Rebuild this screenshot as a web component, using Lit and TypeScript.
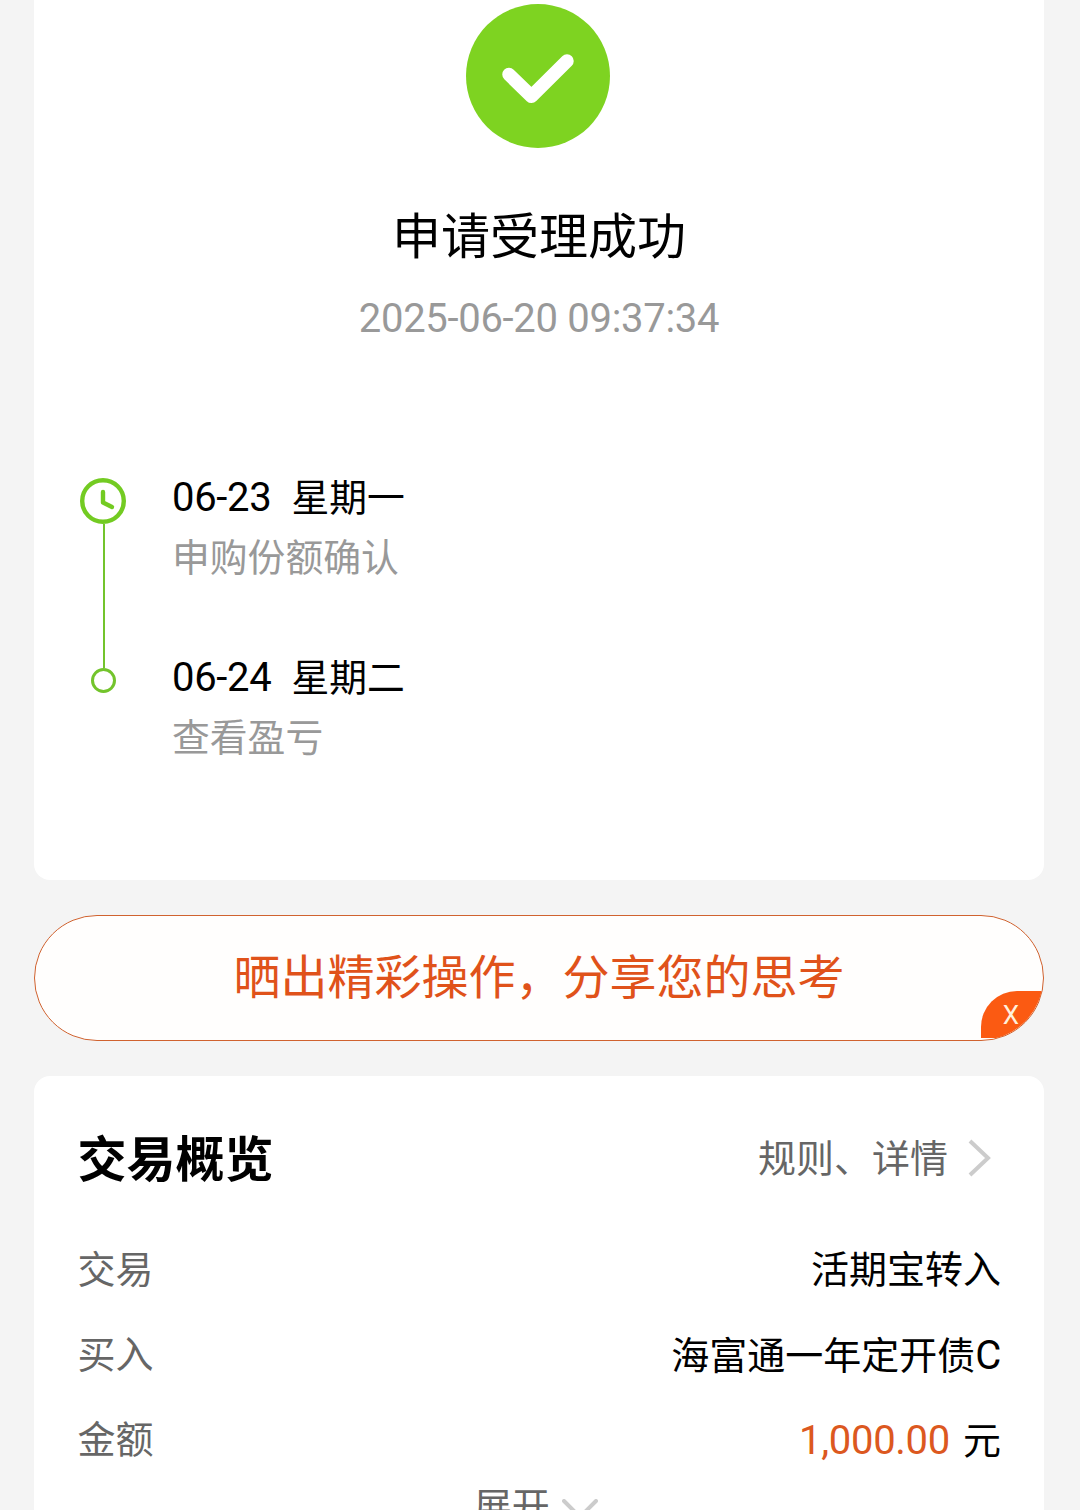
import { LitElement, html, css } from "lit";
import { customElement } from "lit/decorators.js";

interface Step {
  day: string;
  weekday: string;
  note: string;
}

const steps: Step[] = [
  { day: "06-23", weekday: "星期一", note: "申购份额确认" },
  { day: "06-24", weekday: "星期二", note: "查看盈亏" },
];

@customElement("result-card")
class ResultCard extends LitElement {
  static styles = css`
    :host {
      display: flex;
      flex-direction: column;
      box-sizing: border-box;
      height: 880px;
      padding: 4px 46px 0;
      background: #fff;
      border-radius: 0 0 16px 16px;
    }
    .badge {
      display: block;
      align-self: center;
      width: 146px;
      height: 144px;
      margin-right: 2px;
    }
    .title,
    .time {
      text-align: center;
      line-height: 60px;
      white-space: nowrap;
    }
    .title {
      margin-top: 60px;
      font-size: 49px;
      color: #000;
    }
    .time {
      margin-top: 21px;
      font-size: 40px;
      letter-spacing: -0.3px;
      color: #999;
    }
    .timeline {
      display: flex;
      margin-top: 119px;
    }
    .rail {
      display: flex;
      flex-direction: column;
      align-items: center;
      width: 47px;
      padding-top: 10px;
    }
    .clock {
      display: block;
      width: 47px;
      height: 46px;
    }
    .line {
      width: 2px;
      height: 144px;
      background: #73c42c;
    }
    .dot {
      box-sizing: border-box;
      width: 25px;
      height: 25px;
      border: 3px solid #73c42c;
      border-radius: 50%;
    }
    .steps {
      display: flex;
      flex-direction: column;
      gap: 60px;
      margin-left: 45px;
    }
    .head,
    .note {
      height: 60px;
      line-height: 60px;
      font-size: 37.8px;
      white-space: nowrap;
    }
    .head {
      display: flex;
      gap: 20px;
      color: #000;
    }
    .day {
      font-size: 40px;
      letter-spacing: -0.3px;
    }
    .note {
      line-height: 61px;
      color: #999;
    }
  `;

  render() {
    return html`
      <svg class="badge" viewBox="0 0 146 144">
        <circle cx="73" cy="72" r="72" fill="#7ed321" />
        <path d="M44 70.500 L66.500 92.300 L102 57" fill="none" stroke="#fff" stroke-width="13.500" stroke-linecap="round" stroke-linejoin="round" />
      </svg>
      <div class="title">申请受理成功</div>
      <div class="time">2025-06-20 09:37:34</div>
      <div class="timeline">
        <div class="rail">
          <svg class="clock" viewBox="0 0 47 46">
            <circle cx="23" cy="23" r="20.800" fill="none" stroke="#73cb22" stroke-width="4.400" />
            <path d="M23 14 V24.500 L32 29" fill="none" stroke="#73cb22" stroke-width="4.400" stroke-linecap="round" stroke-linejoin="round" />
          </svg>
          <div class="line"></div>
          <div class="dot"></div>
        </div>
        <div class="steps">
          ${steps.map(
            (s) => html`<div>
              <div class="head"><span class="day">${s.day}</span><span>${s.weekday}</span></div>
              <div class="note">${s.note}</div>
            </div>`
          )}
        </div>
      </div>
    `;
  }
}

@customElement("share-banner")
class ShareBanner extends LitElement {
  static styles = css`
    :host {
      display: block;
      position: relative;
      box-sizing: border-box;
      height: 126px;
      border: 1.5px solid #d0622f;
      border-radius: 63px;
      background: #fffefd;
      overflow: hidden;
    }
    .text {
      text-align: center;
      font-size: 47px;
      line-height: 123px;
      color: #e0521a;
      white-space: nowrap;
    }
    .close {
      position: absolute;
      right: 0;
      bottom: 2px;
      width: 62px;
      height: 47px;
      box-sizing: border-box;
      padding-right: 2px;
      border-radius: 36px 0 0 0;
      background: #fb5a12;
      color: #fff0dc;
      font-size: 26px;
      line-height: 48px;
      text-align: center;
    }
  `;

  render() {
    return html`
      <div class="text">晒出精彩操作，分享您的思考</div>
      <div class="close">X</div>
    `;
  }
}

@customElement("overview-card")
class OverviewCard extends LitElement {
  static styles = css`
    :host {
      display: block;
      box-sizing: border-box;
      height: 460px;
      padding: 46px 43px 0 43.5px;
      border-radius: 16px 16px 0 0;
      background: #fff;
      font-size: 38px;
      color: #000;
      white-space: nowrap;
    }
    .top,
    .row,
    .link,
    .more {
      display: flex;
      align-items: center;
    }
    .top,
    .row {
      justify-content: space-between;
    }
    .top {
      height: 72px;
      margin-bottom: 34px;
    }
    .heading {
      padding-top: 6px;
      font-size: 49px;
      font-weight: 700;
      line-height: 70px;
    }
    .link {
      gap: 20px;
      padding-right: 10px;
      color: #666;
    }
    .link-text {
      padding-top: 2px;
      line-height: 70px;
    }
    .right {
      display: block;
      width: 23px;
      height: 38px;
    }
    .row {
      height: 85px;
      line-height: 85px;
    }
    .label,
    .more {
      color: #666;
    }
    .latin,
    .amount {
      font-size: 40px;
      letter-spacing: -0.3px;
    }
    .amount {
      margin-right: 13px;
      color: #dc5820;
    }
    .more {
      justify-content: center;
      gap: 12px;
      height: 49px;
      line-height: 49px;
      padding-right: 7px;
    }
    .down {
      display: block;
      width: 36px;
      height: 22px;
      margin-top: 4px;
    }
  `;

  render() {
    return html`
      <div class="top">
        <div class="heading">交易概览</div>
        <div class="link">
          <span class="link-text">规则、详情</span>
          <svg class="right" viewBox="0 0 23 38">
            <path d="M2 2 L20 19 L2 36" fill="none" stroke="#ccc" stroke-width="4" />
          </svg>
        </div>
      </div>
      <div class="row"><span class="label">交易</span><span>活期宝转入</span></div>
      <div class="row"><span class="label">买入</span><span>海富通一年定开债<span class="latin">C</span></span></div>
      <div class="row">
        <span class="label">金额</span>
        <span><span class="amount">1,000.00</span>元</span>
      </div>
      <div class="more">
        <span>展开</span>
        <svg class="down" viewBox="0 0 36 22">
          <path d="M2 2 L18 18 L34 2" fill="none" stroke="#ccc" stroke-width="4" stroke-linecap="round" />
        </svg>
      </div>
    `;
  }
}

@customElement("app-root")
class AppRoot extends LitElement {
  static styles = css`
    :host {
      display: flex;
      flex-direction: column;
      gap: 35px;
      box-sizing: border-box;
      height: 1510px;
      padding: 0 36px 0 34px;
      overflow: hidden;
      background: #f4f4f4;
      font-family: Roboto, "Noto Sans CJK SC", sans-serif;
    }
    result-card,
    share-banner,
    overview-card {
      flex: none;
    }
  `;

  render() {
    return html`
      <result-card></result-card>
      <share-banner></share-banner>
      <overview-card></overview-card>
    `;
  }
}
